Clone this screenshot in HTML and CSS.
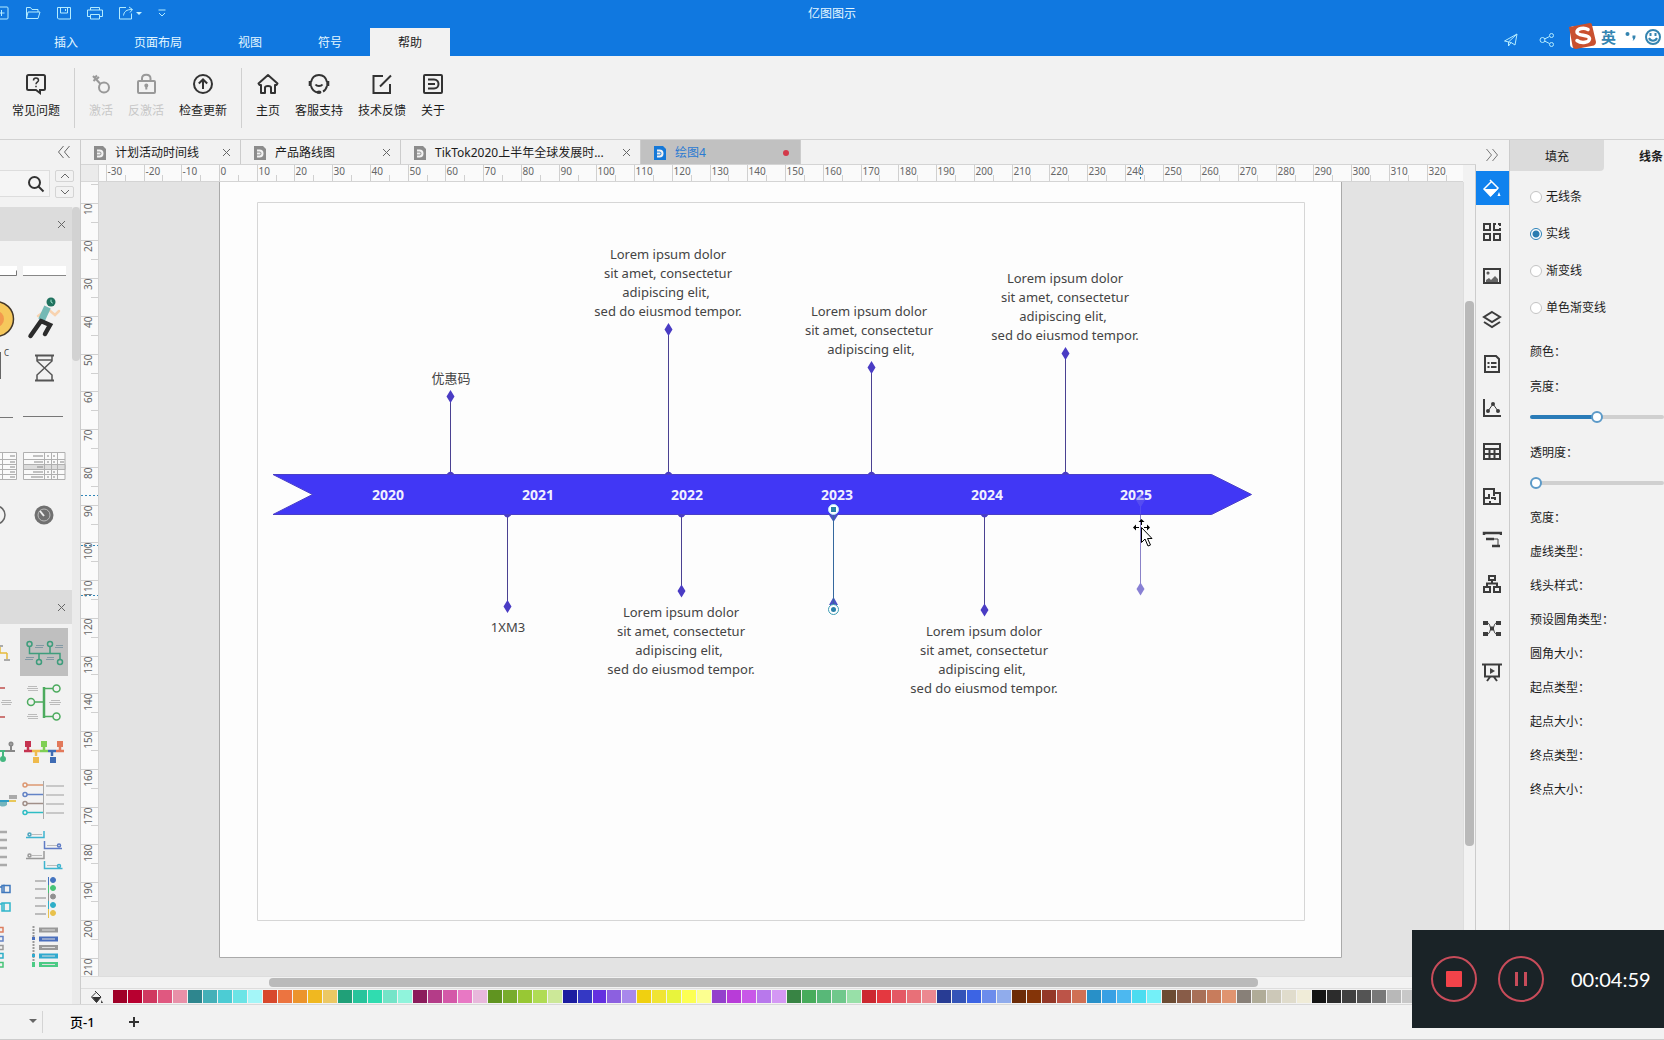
FILE: index.html
```html
<!DOCTYPE html>
<html lang="zh-CN">
<head>
<meta charset="utf-8">
<title>亿图图示</title>
<meta name="viewport" content="width=device-width, initial-scale=1">
<link rel="stylesheet" href="styles.css">
</head>
<body>
<header class="app-header">
  <div class="title-row">
    <div class="quick">
      <button class="quick-btn" aria-label="新建"><svg width="18" height="16" viewBox="0 0 18 16"><rect x="2" y="2" width="13" height="12" rx="1"/><path d="M8.500 5v6M5.500 8h6"/></svg></button>
      <button class="quick-btn" aria-label="打开"><svg width="18" height="16" viewBox="0 0 18 16"><path d="M2.500 13.500v-11h4l1.500 2h6v2.500M2.500 13.500l1.500-6.500h12l-2 6.500z"/></svg></button>
      <button class="quick-btn" aria-label="保存"><svg width="18" height="16" viewBox="0 0 18 16"><path d="M2.500 2.500h13v11.500h-12l-1-1zM5.500 2.500v5.500h7v-5.500M10.500 4v2"/></svg></button>
      <button class="quick-btn" aria-label="打印"><svg width="18" height="16" viewBox="0 0 18 16"><path d="M4.500 5V2.500h9V5M4.500 11.500h-3V5h15v6.500h-3M4.500 9.500h9v4.500h-9z"/></svg></button>
      <button class="quick-btn quick-share" aria-label="导出"><svg width="18" height="16" viewBox="0 0 18 16"><path d="M9 2.500H2.500V14h12V8.500M6.500 10.500c.5-4 3-6 8.500-6M12 2l3.500 2.500L13 7.500"/></svg><i class="caret"></i></button>
      <button class="quick-btn quick-more" aria-label="自定义"><svg width="10" height="10" viewBox="0 0 10 10"><path d="M1.500 2h7M2 5l3 3 3-3"/></svg></button>
    </div>
    <h1 class="app-title">亿图图示</h1>
  </div>
  <div class="menu-row">
    <nav class="menu">
      <button class="menu-tab">插入</button>
      <button class="menu-tab">页面布局</button>
      <button class="menu-tab">视图</button>
      <button class="menu-tab">符号</button>
      <button class="menu-tab is-active">帮助</button>
    </nav>
    <div class="share">
      <button class="share-btn" aria-label="发送"><svg width="16" height="16" viewBox="0 0 16 16"><path d="M1.500 9L14 2l-2 11-4-2.500zM14 2L5.500 10v4L8 10.500"/></svg></button>
      <button class="share-btn" aria-label="分享"><svg width="16" height="16" viewBox="0 0 16 16"><circle cx="3.500" cy="8" r="2.500"/><circle cx="12.500" cy="3.500" r="2"/><circle cx="12.500" cy="12.500" r="2"/><path d="M5.500 7l5-2.500M5.500 9l5 2.500"/></svg></button>
    </div>
  </div>
  <div class="ime">
    <svg class="ime-logo" width="30" height="28" viewBox="0 0 30 28"><path d="M1 5L22 1q2 0 2 2l4 17q0 3-2 3.500L8 27q-3 0-3.500-3z" fill="#c9502f"/><path d="M20 7.500c-4-2.500-11-1-11 2.500 0 4.500 12 2 12.500 6.500.3 4-8 5.500-12.500 2" fill="none" stroke="#fff" stroke-width="3.500" stroke-linecap="round"/></svg>
    <span class="ime-lang">英</span>
    <svg width="12" height="14" viewBox="0 0 12 14"><circle cx="3.500" cy="4" r="2" fill="#3484b0"/><path d="M8.500 5.500h3c.2 2.500-.8 4.500-3 5.500 1-1.500 1-2.500 0-3z" fill="#3484b0"/></svg>
    <svg class="ime-smile" width="18" height="18" viewBox="0 0 18 18"><g fill="none" stroke="#3484b0" stroke-width="2"><circle cx="9" cy="9" r="7"/><path d="M5 10c1.500 3.500 6.500 3.500 8 0"/><path d="M6.500 5v3M11.500 5v3"/></g></svg>
  </div>
</header>

<section class="ribbon">
  <div class="ribbon-group">
    <button class="tool"><svg width="22" height="22" viewBox="0 0 22 22"><path d="M3.500 2h15q1.500 0 1.500 1.500v12q0 1.500-1.500 1.500H15v3l-4-3H3.500Q2 17 2 15.500v-12Q2 2 3.500 2z"/><path stroke-width="1.500" d="M8.500 7.500c0-3.500 5-3.200 5-.3 0 2-2.500 2-2.500 4M11 12.800v1.500"/></svg><span>常见问题</span></button>
  </div>
  <div class="ribbon-group">
    <button class="tool" disabled><svg width="22" height="22" viewBox="0 0 22 22"><circle cx="14" cy="14.500" r="5"/><path d="M10.500 11L3 3M6 6.500l3-2.500M3.500 8l2.500-2.500M5 4.500l2-2"/></svg><span>激活</span></button>
    <button class="tool" disabled><svg width="22" height="22" viewBox="0 0 22 22"><rect x="3" y="8" width="17" height="12" rx="1"/><path d="M7 8V5.500c0-5 8.500-5 8.500 0V8"/><circle cx="11.300" cy="12.500" r="1"/><path d="M11.300 13v3.500"/></svg><span>反激活</span></button>
    <button class="tool"><svg width="22" height="22" viewBox="0 0 22 22"><circle cx="11" cy="11" r="9"/><path d="M11 16V7M6.800 10.500L11 6.500l4.200 4"/></svg><span>检查更新</span></button>
  </div>
  <div class="ribbon-group">
    <button class="tool"><svg width="22" height="22" viewBox="0 0 22 22"><path stroke-linejoin="round" d="M11 2l9.500 8.500-1 1.500H18v8h-4v-5.500c0-2-6-2-6 0V20H4v-8H2.500l-1-1.500z"/></svg><span>主页</span></button>
    <button class="tool"><svg width="22" height="22" viewBox="0 0 22 22"><path d="M3 9C5-.5 17-.5 19 9M3 13c1 3.500 3 6 7 6.500M19 13c-.7 2.500-2 4.500-4 5.500M7.500 11.500c1.500 2 5.500 2 7 0"/><path stroke-width="3" d="M2.200 8v5M19.800 8v5"/><ellipse cx="11" cy="19.300" rx="1.500" ry=".7" fill="#333"/></svg><span>客服支持</span></button>
    <button class="tool"><svg width="22" height="22" viewBox="0 0 22 22"><path d="M12 3H2.500v17H19v-9M9 13.500L20 2.500"/></svg><span>技术反馈</span></button>
    <button class="tool"><svg width="22" height="22" viewBox="0 0 22 22"><rect x="2" y="2" width="18" height="18" rx="1"/><path d="M6 6.500h6c6 0 6 9 0 9H6M6 11h7"/></svg><span>关于</span></button>
  </div>
</section>

<main class="body">
  <aside class="shapes">
    <div class="shapes-top"><button class="plain" aria-label="收起"><svg width="14" height="14" viewBox="0 0 14 14"><path d="M6.500 1L1.500 7l5 6M12.500 1l-5 6 5 6"/></svg></button></div>
    <div class="search-row">
      <button class="search" aria-label="搜索"><svg width="18" height="18" viewBox="0 0 18 18"><circle cx="7.500" cy="7.500" r="5.500"/><path d="M11.500 11.500l5 5"/></svg></button>
      <div class="spin">
        <button aria-label="上移"><svg width="10" height="6" viewBox="0 0 10 6"><path d="M1 5l4-4 4 4"/></svg></button>
        <button aria-label="下移"><svg width="10" height="6" viewBox="0 0 10 6"><path d="M1 1l4 4 4-4"/></svg></button>
      </div>
    </div>
    <div class="shapes-scroll">
      <div class="shapes-list">
        <div class="lib-head"><button class="plain" aria-label="关闭"><svg width="9" height="9" viewBox="0 0 9 9"><path d="M1 1l7 7M8 1L1 8"/></svg></button></div>
        <div class="lib lib-basic">
          <svg viewBox="0 0 48 48"><path fill="#fff" d="M0 21h46v9H0z"/><path d="M0 30.500h45.500v-5" fill="none" stroke="#777"/></svg>
          <svg viewBox="0 0 48 48"><path fill="#fff" d="M3 21h43v9H3z"/><path d="M3 30.500h43" stroke="#888"/></svg>
          <svg viewBox="0 0 48 48"><circle cx="25" cy="25" r="17.500" fill="#f6c85c" stroke="#44382a" stroke-width="1.500"/><circle cx="25" cy="25" r="8" fill="#f39a4d"/></svg>
          <svg viewBox="0 0 48 48" fill="none" stroke-linecap="round"><path d="M29 16l6 5 4-4M25 17l-7 5" stroke="#f8d3b0" stroke-width="2.500"/><path d="M27.500 13l-6 13" stroke="#74b9b5" stroke-width="7" stroke-linecap="butt"/><path d="M21 27L10.500 42M21 27l9 4-5 9" stroke="#2b2b2b" stroke-width="4.500"/><circle cx="31" cy="8" r="4.500" fill="#20725f"/><path d="M31 6v2l1.500 1" stroke="#9fe5cf"/></svg>
          <svg viewBox="0 0 48 48"><path d="M25 10h4v25h-4" fill="none" stroke="#666" stroke-width="2"/><text x="33" y="13" class="tiny">C</text></svg>
          <svg viewBox="0 0 48 48" fill="none" stroke="#555" stroke-width="2"><path d="M15 12.500h19M15 37.500h19"/><path stroke-width="1.500" d="M17 13v5l15 14v5M32 13v5L17 32v5M17 17h15"/></svg>
          <svg viewBox="0 0 48 48"><path d="M0 25.500h42" stroke="#777"/></svg>
          <svg viewBox="0 0 48 48"><path d="M3 24.500h40" stroke="#777"/></svg>
          <svg viewBox="0 0 48 48" fill="none" stroke="#b0b0b0"><path fill="#fafafa" d="M4 11.500h41.500v27H4zM31.500 11v27"/><path d="M4 18.500h41M4 23.500h41M4 28.500h41M4 33.500h41"/><path stroke="#888" d="M39 15h5M39 21h5M39 26h5M39 31h5M39 36h5"/></svg>
          <svg viewBox="0 0 48 48" fill="none" stroke="#b0b0b0"><path fill="#fafafa" d="M3.500 11.500h41.500v27H3.500z"/><path fill="#dcdcdc" d="M3.500 23.500h41.500v5H3.500z"/><path d="M24.500 11v27M31.500 11v27M37.500 11v27M3 18.500h42M3 33.500h42"/><path stroke="#888" d="M13 15h10M14 21h9M17 26h6M13 31h10M11 36h12M27 15h2M33 15h2M27 21h2M33 21h2M40 21h4M27 31h2M33 31h2M27 36h2M33 36h2"/></svg>
          <svg viewBox="0 0 48 48" fill="none" stroke="#666" stroke-width="1.500"><circle cx="25" cy="25" r="9"/></svg>
          <svg viewBox="0 0 48 48"><circle cx="24" cy="25" r="9.500" fill="#707070"/><circle cx="24" cy="25" r="6" fill="none" stroke="#bbb"/><path d="M24 26l-4-5" stroke="#eee" stroke-width="2"/></svg>
        </div>
        <div class="lib-head"><button class="plain" aria-label="关闭"><svg width="9" height="9" viewBox="0 0 9 9"><path d="M1 1l7 7M8 1L1 8"/></svg></button></div>
        <div class="lib">
          <svg viewBox="0 0 48 48" fill="none" stroke="#e6ba3c" stroke-width="1.500"><path d="M10 25h26M29 18v7M36 25v6"/><path stroke="#aaa" stroke-width="2" d="M26 18h6M33 32h6"/></svg>
          <svg class="is-picked" viewBox="0 0 48 48" fill="none" stroke="#3e9d7c" stroke-width="1.500"><path d="M9.500 18v7.500H40V31M30 18v7M19 25v6"/><circle cx="9.500" cy="16" r="2.500"/><circle cx="30" cy="16" r="2.500"/><circle cx="19" cy="34" r="2.500"/><circle cx="40" cy="34" r="2.500"/><path stroke="#8299a4" stroke-width="1" d="M16 17.500h8M15 19.500h8M36 17.500h7M35 19.500h8M6 29.500h8M5 31.500h8M27 29.500h7M26 31.500h8"/></svg>
          <svg viewBox="0 0 48 48" fill="none" stroke="#c0504d" stroke-width="1.500"><path d="M20 11h14M20 40h14"/><path stroke="#bbb" stroke-width="1" d="M31 23.500h9M30 25.500h11M31 27.500h9"/></svg>
          <svg viewBox="0 0 48 48" fill="none" stroke="#4cab5e" stroke-width="1.500"><path stroke-width="2.500" d="M24 10v31"/><path d="M24 11.500h9M24 25H14M24 39.500h9"/><circle cx="36.500" cy="11.500" r="3.500"/><circle cx="11" cy="25" r="3.500"/><circle cx="36.500" cy="39.500" r="3.500"/><path stroke="#bbb" stroke-width="1" d="M8 9.500h9M7 11.500h11M8 13.500h10M31 23.500h9M29 25.500h12M30 27.500h10M8 37.500h9M7 39.500h11M8 41.500h10"/></svg>
          <svg viewBox="0 0 48 48" fill="none" stroke="#45b780" stroke-width="2"><path d="M20 25h14"/><circle cx="32" cy="33" r="2" fill="#45b780"/><path d="M32 25v6"/><path stroke="#888" d="M34 25h10M40 19v6"/><circle cx="40" cy="18" r="1.500" stroke="#888"/></svg>
          <svg viewBox="0 0 48 48" fill="none" stroke-width="2.500"><path stroke="#c53350" d="M4 25h8M8 20v5"/><path stroke="#efba4c" d="M12 25h8M16 25v5"/><path stroke="#7fcf55" d="M20 25h8M24 20v5"/><path stroke="#3f6cb4" d="M28 25h8M32 25v5"/><path stroke="#e2795b" d="M36 25h8M40 20v5"/><path fill="#c53350" stroke="none" d="M5 15h6v6H5z"/><path fill="#efba4c" stroke="none" d="M13 31h6v6h-6z"/><path fill="#7fcf55" stroke="none" d="M21 15h6v6h-6z"/><path fill="#3f6cb4" stroke="none" d="M30 31h6v6h-6z"/><path fill="#e2795b" stroke="none" d="M37 15h6v6h-6z"/></svg>
          <svg viewBox="0 0 48 48" fill="none" stroke-width="2"><path stroke="#2f9ec4" d="M20 26h18"/><path stroke="#e8c75a" d="M38 26h7"/><path fill="#75b5bd" d="M28 27h8v3q-4 3-8 0z"/><path fill="#aaa" d="M38 20h8v4h-8z"/></svg>
          <svg viewBox="0 0 48 48" fill="none" stroke-width="1.500"><path stroke="#aaa" stroke-width="1" d="M23.500 6v38"/><path stroke="#bbb" d="M26 11h18M26 20h18M26 29h18M26 38h18"/><path stroke="#dd9872" d="M7 10h16"/><circle cx="5" cy="10" r="2" stroke="#dd9872"/><path stroke="#6383c6" d="M7 19.500h16"/><circle cx="5" cy="19.500" r="2" stroke="#6383c6"/><path stroke="#a08f88" d="M7 28.500h16"/><circle cx="5" cy="28.500" r="2" stroke="#a08f88"/><path stroke="#2ebdc4" d="M7 37.500h16"/><circle cx="5" cy="37.500" r="2" stroke="#2ebdc4"/></svg>
          <svg viewBox="0 0 48 48" stroke="#aaa" stroke-width="2.500"><path d="M29 8h7M29 16h7M29 24h7M29 33h7M29 41h7"/></svg>
          <svg viewBox="0 0 48 48" fill="none" stroke-width="1.500"><path stroke="#3eb4cf" d="M6 13.500h18V7M24.500 37v7.500h18"/><path stroke="#5f7cc5" d="M24.500 17v7.500H42"/><path stroke="#999" d="M6 34.500h18V27"/><path stroke="#bbb" stroke-width="1" d="M12 10.500h10M27 21.500h10M12 31.500h10M27 41.500h10"/><circle cx="9.500" cy="10.500" r="1.500" stroke="#4aa3bd"/><circle cx="39" cy="21.500" r="1.500" stroke="#5f7cc5"/><circle cx="9.500" cy="31.500" r="1.500" stroke="#999"/><circle cx="39" cy="42" r="1.500" stroke="#3eb4cf"/></svg>
          <svg viewBox="0 0 48 48" fill="none" stroke-width="1.500"><path stroke="#3f78bd" d="M27 14h4M31 12.500h8v7h-8zM33 11.500v8"/><path stroke="#2fb5ca" d="M27 31h4M31 30h8v8h-8zM33 30v8"/></svg>
          <svg viewBox="0 0 48 48"><g stroke="#aaa" stroke-width="1.500"><path d="M15 8h11M15 16h11M15 25h11M15 33h11M15 41h11"/></g><g fill="#4474c0" stroke="#4474c0"><path d="M28.500 4v8"/><circle cx="33" cy="7" r="2.500"/></g><g fill="#47c477" stroke="#47c477"><path d="M28.500 12v8"/><circle cx="33" cy="15" r="2.500"/></g><g fill="#909090" stroke="#909090"><path d="M28.500 20v8"/><circle cx="33" cy="23.500" r="2.500"/></g><g fill="#2eaec8" stroke="#2eaec8"><path d="M28.500 28v8"/><circle cx="33" cy="32" r="2.500"/></g><g fill="#e8c14c" stroke="#e8c14c"><path d="M28.500 36v9"/><circle cx="33" cy="40" r="2.500"/></g></svg>
          <svg viewBox="0 0 48 48" fill="none" stroke-width="1.500"><path stroke="#dd7e5f" d="M27 5.500h5v4.500h-5"/><path stroke="#6383c6" d="M27 14.500h5v4.500h-5"/><path stroke="#999" d="M27 23.500h5v4h-5"/><path stroke="#2eaec8" d="M27 31.500h5v4.500h-5"/><path stroke="#47c477" d="M27 40.500h5v4.500h-5"/></svg>
          <svg viewBox="0 0 48 48"><path stroke="#999" stroke-dasharray="2 1" stroke-width="2" d="M13.500 4v38"/><path fill="#999" d="M19 5.500h19v5H19zM19 23h19v5H19z"/><path fill="#4a6fbd" d="M19 14.500h19v5H19zM12 15h3v3h-3z"/><path fill="#2fa9cf" d="M19 31.500h19v5H19zM12 32h3v3h-3z"/><path fill="#4ccb85" d="M19 40h19v5H19zM12 40h3v5h-3z"/><path stroke="#ddd" d="M22 8h13M22 17h13M22 25.500h13M22 34h13M22 42.500h13"/></svg>
        </div>
      </div>
      <div class="side-track"><i></i></div>
    </div>
  </aside>

  <section class="editor">
    <nav class="docs">
      <div class="doc"><svg width="12" height="14" viewBox="0 0 12 14"><path class="sheet" d="M0 0h9l3 3v11H0z"/><path d="M3 4.500h2.500c4 0 4 6 0 6H3M3 7.500h3.500"/></svg><span>计划活动时间线</span><button class="plain" aria-label="关闭"><svg width="9" height="9" viewBox="0 0 9 9"><path d="M1 1l7 7M8 1L1 8"/></svg></button></div>
      <div class="doc"><svg width="12" height="14" viewBox="0 0 12 14"><path class="sheet" d="M0 0h9l3 3v11H0z"/><path d="M3 4.500h2.500c4 0 4 6 0 6H3M3 7.500h3.500"/></svg><span>产品路线图</span><button class="plain" aria-label="关闭"><svg width="9" height="9" viewBox="0 0 9 9"><path d="M1 1l7 7M8 1L1 8"/></svg></button></div>
      <div class="doc doc-wide"><svg width="12" height="14" viewBox="0 0 12 14"><path class="sheet" d="M0 0h9l3 3v11H0z"/><path d="M3 4.500h2.500c4 0 4 6 0 6H3M3 7.500h3.500"/></svg><span>TikTok2020上半年全球发展时...</span><button class="plain" aria-label="关闭"><svg width="9" height="9" viewBox="0 0 9 9"><path d="M1 1l7 7M8 1L1 8"/></svg></button></div>
      <div class="doc is-active"><svg width="12" height="14" viewBox="0 0 12 14"><path class="sheet" d="M0 0h9l3 3v11H0z"/><path d="M3 4.500h2.500c4 0 4 6 0 6H3M3 7.500h3.500"/></svg><span>绘图4</span><i class="dirty"></i></div>
    </nav>
    <div class="work">
      <div class="corner"></div>
      <div class="ruler-h"><svg id="ruler-h"></svg></div>
      <div class="blank"></div>
      <div class="ruler-v"><svg id="ruler-v"></svg></div>
      <div class="canvas">
        <svg class="page" width="1123" height="776" viewBox="219 182 1123 776">
          <path class="page-edge" d="M219.500 182v775.500h1122V182"/>
          <path class="margin" d="M257.500 202.500h1047v718h-1047z"/>
          <g class="stems">
            <path d="M450.500 397v77M668.500 330v144M871.500 368v106M1065.500 354v120M507.500 515v91M681.500 515v76M984.500 515v95"/>
          </g>
          <g class="dots">
            <path d="M446 475q4.500-7 9 0zM664 475q4.500-7 9 0zM867 475q4.500-7 9 0zM1061 475q4.500-7 9 0zM503 514q4.500 7 9 0zM677 514q4.500 7 9 0zM980 514q4.500 7 9 0z"/>
            <path d="M450.500 390l4 6.500-4 6.500-4-6.500zM668.500 323l4 6.500-4 6.500-4-6.500zM871.500 361l4 6.500-4 6.500-4-6.500zM1065.500 347l4 6.500-4 6.500-4-6.500zM507.500 600l4 6.500-4 6.500-4-6.500zM681.500 584.500l4 6.500-4 6.500-4-6.500zM984.500 603.500l4 6.500-4 6.500-4-6.500z"/>
          </g>
          <path class="band" d="M273 474.500h938.500l40 20-40 20H273l39.500-20z"/>
          <g class="years">
            <text x="388" y="500">2020</text><text x="538" y="500">2021</text><text x="687" y="500">2022</text><text x="837" y="500">2023</text><text x="987" y="500">2024</text><text x="1136" y="500">2025</text>
          </g>
          <g class="notes">
            <text x="451" y="383">优惠码</text>
            <text x="508" y="632">1XM3</text>
            <text><tspan x="668" y="259">Lorem ipsum dolor</tspan><tspan x="668" y="278">sit amet, consectetur</tspan><tspan x="666" y="297">adipiscing elit,</tspan><tspan x="668" y="316">sed do eiusmod tempor.</tspan></text>
            <text><tspan x="869" y="316">Lorem ipsum dolor</tspan><tspan x="869" y="335">sit amet, consectetur</tspan><tspan x="871" y="354">adipiscing elit,</tspan></text>
            <text><tspan x="1065" y="283">Lorem ipsum dolor</tspan><tspan x="1065" y="302">sit amet, consectetur</tspan><tspan x="1063" y="321">adipiscing elit,</tspan><tspan x="1065" y="340">sed do eiusmod tempor.</tspan></text>
            <text><tspan x="681" y="617">Lorem ipsum dolor</tspan><tspan x="681" y="636">sit amet, consectetur</tspan><tspan x="679" y="655">adipiscing elit,</tspan><tspan x="681" y="674">sed do eiusmod tempor.</tspan></text>
            <text><tspan x="984" y="636">Lorem ipsum dolor</tspan><tspan x="984" y="655">sit amet, consectetur</tspan><tspan x="982" y="674">adipiscing elit,</tspan><tspan x="984" y="693">sed do eiusmod tempor.</tspan></text>
          </g>
          <g class="selected">
            <path class="wedge" d="M829 515h9l-4.500 7zM829 605l4.500-8 4.500 8z"/>
            <path class="rod" d="M833.500 515v90"/>
            <circle class="halo" cx="833.500" cy="509.500" r="5"/><path class="core" d="M831 507h5v5h-5z"/>
            <circle class="halo ring" cx="833.500" cy="609.500" r="5"/><circle class="core" cx="833.500" cy="609.500" r="2.500"/>
          </g>
          <g class="ghost">
            <path class="fade" d="M1140.500 493v21M1136.500 500l4-6.500 4 6.500-4 6.500z"/>
            <path class="rod" d="M1140.500 515v70"/><path class="wedge" d="M1140.500 582.500l4 6.500-4 6.500-4-6.500z"/>
          </g>
          <g class="cursor">
            <path class="arrows" d="M1134 527.500h5M1144 527.500h5M1141.500 520v5M1141.500 531v3"/>
            <path class="tips" d="M1133 527.500l3-3v6zM1150 527.500l-3-3v6zM1141.500 519l-3 3h6z"/>
            <path class="arrow" d="M1141.500 527.500v15l3.500-3.500 3 7 2.500-1-3-6.500h4.500z"/>
          </g>
        </svg>
      </div>
      <div class="scroll-v"><i></i></div>
      <div class="scroll-h"><i></i></div>
    </div>
    <div class="palette">
      <button class="plain bucket" aria-label="填充颜色"><svg width="14" height="14" viewBox="0 0 14 14"><path d="M5 1l6 6-4.500 5.500L1.500 7 6 2.500" fill="none" stroke="#333"/><path d="M2 7h9l-4.500 5.500zM11.500 10l1.500 3h-2z" fill="#333" stroke="none"/></svg></button>
      <div class="swatches" id="swatches"></div>
    </div>
  </section>

  <nav class="rail">
    <button class="rail-top" aria-label="收起面板"><svg width="14" height="14" viewBox="0 0 14 14"><path d="M1.500 1l5 6-5 6M7.500 1l5 6-5 6"/></svg></button>
    <button class="is-active" aria-label="样式"><svg width="20" height="20" viewBox="0 0 20 20"><path d="M8 2l8 8-7.500 8L2 11l7-7" stroke="#fff" stroke-width="1.500"/><path d="M2 11h14l-7 7zM17 14l1.500 4h-3z" fill="#fff" stroke="none"/></svg></button>
    <button aria-label="符号"><svg width="20" height="20" viewBox="0 0 20 20"><path d="M2 2h6v6H2zM2 12h6v6H2zM12 12h6v6h-6zM14 2h-2v6h6V6M16 2h2v2"/></svg></button>
    <button aria-label="图片"><svg width="20" height="20" viewBox="0 0 20 20"><path d="M2 3h16v14H2z"/><circle cx="6" cy="7" r=".5"/><path d="M4 16v-2l3-2 2 2 4-4 3 3v3z" fill="#666" stroke="none"/></svg></button>
    <button aria-label="图层"><svg width="20" height="20" viewBox="0 0 20 20"><path d="M10 2l8 5-8 5-8-5zM2 12l8 5 8-5"/></svg></button>
    <button aria-label="页面"><svg width="20" height="20" viewBox="0 0 20 20"><path d="M3 2h11l3 3v13H3zM5.500 9h2M9 9h5.500M5.500 13h2M9 13h5.500"/></svg></button>
    <button aria-label="图表"><svg width="20" height="20" viewBox="0 0 20 20"><path d="M2 1v17h17"/><path d="M6 13l5-7 5 7" stroke-width="1"/><g fill="#444"><circle cx="6" cy="13" r="1"/><circle cx="11" cy="6" r="1"/><circle cx="16" cy="13" r="1"/></g></svg></button>
    <button aria-label="表格"><svg width="20" height="20" viewBox="0 0 20 20"><path d="M2 2h16v15H2zM2 7h16M2 12h16M7.500 7v10M12.500 7v10"/></svg></button>
    <button aria-label="平面图"><svg width="20" height="20" viewBox="0 0 20 20"><path d="M2 3h10v4h6v11H2zM2 12h5V8M12 7v3M9 12h4v2M8 18v-3"/></svg></button>
    <button aria-label="甘特图"><svg width="20" height="20" viewBox="0 0 20 20"><path d="M2 5V3h17v2M4 9h8M10 16h8" stroke-width="2.500"/><path d="M12 9h4v6" stroke-width="1"/></svg></button>
    <button aria-label="组织结构图"><svg width="20" height="20" viewBox="0 0 20 20"><path d="M7 2h6v4H7zM2 13h6v5H2zM12 13h6v5h-6zM10 6v3M5 13V9.500h10V13"/></svg></button>
    <button aria-label="思维导图"><svg width="20" height="20" viewBox="0 0 20 20"><path d="M1 5h5M14 5h5M1 16h5M14 16h5M8 10.500h4" stroke-width="4"/><path d="M5 5c4 0 2 5.500 5 5.500S11 5 15 5M5 16c4 0 2-5.500 5-5.500s1 5.500 5 5.500" stroke-width="1"/></svg></button>
    <button aria-label="演示"><svg width="20" height="20" viewBox="0 0 20 20"><path d="M0 2.500h20M3 3v11.500h14V3M8 15l-3 4M12 15l3 4"/><path d="M8 6l5 3-5 3z" fill="#444" stroke="none"/></svg></button>
  </nav>

  <aside class="props">
    <div class="props-tabs"><button>填充</button><button class="is-active">线条</button></div>
    <fieldset class="line-kind">
      <label><input type="radio" name="kind">无线条</label>
      <label><input type="radio" name="kind" checked>实线</label>
      <label><input type="radio" name="kind">渐变线</label>
      <label><input type="radio" name="kind">单色渐变线</label>
    </fieldset>
    <div class="settings">
      <span>颜色：</span>
      <label for="bright">亮度：</label>
      <input class="half" type="range" id="bright" min="0" max="100" value="50">
      <label for="alpha">透明度：</label>
      <input type="range" id="alpha" min="0" max="100" value="0">
      <span>宽度：</span>
      <span>虚线类型：</span>
      <span>线头样式：</span>
      <span>预设圆角类型：</span>
      <span>圆角大小：</span>
      <span>起点类型：</span>
      <span>起点大小：</span>
      <span>终点类型：</span>
      <span>终点大小：</span>
    </div>
  </aside>
</main>

<footer class="status">
  <button class="page-menu" aria-label="页面列表"><i class="caret"></i></button>
  <button class="page-tab">页-1</button>
  <button class="plain add" aria-label="新建页面"><svg width="12" height="12" viewBox="0 0 12 12"><path d="M6 1v10M1 6h10"/></svg></button>
</footer>

<section class="recorder">
  <button aria-label="停止"><svg width="48" height="48" viewBox="0 0 48 48"><circle cx="24" cy="24" r="22"/><rect x="16" y="16" width="16" height="16" rx="1" fill="#f2434a" stroke="none"/></svg></button>
  <button aria-label="暂停"><svg width="48" height="48" viewBox="0 0 48 48"><circle cx="24" cy="24" r="22"/><path d="M19.500 17v14M28.500 17v14" stroke-width="3"/></svg></button>
  <time>00:04:59</time>
</section>
<script src="app.js"></script>
</body>
</html>
```
FILE: styles.css
```css
* { box-sizing: border-box; }
body {
  margin: 0;
  height: 100vh;
  display: flex;
  flex-direction: column;
  overflow: hidden;
  background: #f2f2f2;
  color: #1c1c1c;
  font: 12px/16px "Noto Sans", "Noto Sans CJK SC", sans-serif;
}
button {
  margin: 0;
  padding: 0;
  border: 0;
  background: none;
  color: inherit;
  font: inherit;
  display: flex;
  align-items: center;
  justify-content: center;
  flex: none;
}
svg { display: block; flex: none; }
.plain svg { fill: none; stroke: #666; }
.caret { border: 4px solid transparent; border-top-color: currentColor; border-bottom: 0; }

/* header */
.app-header { position: relative; flex: none; background: #1078e0; color: #e4f7ff; }
.title-row { display: grid; grid-template-columns: 1fr auto 1fr; height: 28px; align-items: center; padding-bottom: 2px; }
.quick { display: flex; margin-left: -14px; color: #c4f0ff; }
.quick-btn { width: 31px; height: 24px; }
.quick-btn svg, .share-btn svg { fill: none; stroke: #b4ecff; }
.quick-share { width: 38px; gap: 1px; }
.quick-share .caret { border-width: 3px; border-bottom: 0; }
.quick-more { width: 28px; }
.app-title { margin: 0; padding-top: 2px; font-size: 12px; font-weight: 400; }
.menu-row { display: flex; justify-content: space-between; height: 28px; }
.menu { display: flex; padding-left: 26px; }
.menu-tab { padding: 2px 28px 0; }
.menu-tab.is-active { background: #f2f2f2; color: #222; }
.share { display: flex; gap: 20px; padding: 0 109px 4px 0; }
.ime { position: absolute; right: 0; top: 26px; height: 22px; display: flex; align-items: center; gap: 8px; padding: 0 2px 0 31px; background: #fff; border-radius: 4px 0 0 4px; }
.ime-logo { position: absolute; left: -2px; top: -4px; }
.ime-lang { color: #3484b0; font-size: 15px; font-weight: 700; }

/* ribbon */
.ribbon { flex: none; display: flex; height: 84px; padding: 12px 0; border-bottom: 1px solid #d2d2d2; }
.ribbon-group { display: flex; align-items: flex-start; gap: 15px; padding: 5px 14px 0; border-right: 1px solid #d0d0d0; height: 60px; }
.ribbon-group:first-child { padding-left: 12px; }
.ribbon-group:last-child { border: 0; }
.tool { flex-direction: column; gap: 8px; }
.tool svg { fill: none; stroke: #333; stroke-width: 2; }
.tool:disabled { color: #c8c8c8; }
.tool:disabled svg { stroke: #999; }

.body { flex: 1; display: flex; min-height: 0; }

/* shape library */
.shapes { flex: none; width: 81px; display: flex; flex-direction: column; border-right: 1px solid #ccc; }
.shapes-top { height: 30px; display: flex; justify-content: flex-end; padding: 0 9px 6px 0; }
.search-row { height: 37px; display: flex; gap: 5px; }
.search { width: 50px; height: 27px; border: 1px solid #ddd; border-left: 0; justify-content: flex-end; padding-right: 4px; background: #f5f5f5; }
.search svg { fill: none; stroke: #333; stroke-width: 2; }
.spin { width: 19px; display: flex; flex-direction: column; gap: 4px; }
.spin button { height: 12px; border: 1px solid #d4d4d4; border-radius: 2px; }
.spin svg { fill: none; stroke: #666; }
.shapes-scroll { flex: 1; display: flex; min-height: 0; }
.shapes-list { flex: 1; overflow: hidden; }
.side-track { width: 8px; background: #ebebeb; }
.side-track i { display: block; height: 154px; border-radius: 4px; background: #d2d2d2; }
.lib-head { height: 34px; display: flex; justify-content: flex-end; padding-right: 6px; background: #dcdcdc; }
.lib { display: grid; grid-template-columns: 48px 48px; grid-auto-rows: 48px; gap: 1px; margin-left: -29px; padding-top: 4px; }
.lib-basic { padding-bottom: 52px; }
.is-picked { background: #bfbfbf; }
.tiny { font-size: 8px; fill: #444; }

/* document tabs */
.editor { flex: 1; min-width: 0; display: flex; flex-direction: column; }
.docs { flex: none; display: flex; height: 25px; border-bottom: 1px solid #d4d4d4; }
.doc { flex: none; width: 160px; display: flex; align-items: center; gap: 9px; padding: 1px 9px 0 13px; border-right: 1px solid #ccc; white-space: nowrap; }
.doc-wide { width: 240px; }
.doc span { flex: 1; padding-top: 1px; }
.doc > svg { fill: none; stroke: #f2f2f2; stroke-width: 2; }
.sheet { fill: #8c8c8c; stroke: none; }
.doc.is-active { background: #c1c1c1; color: #2a7ad2; padding-right: 11px; }
.is-active .sheet { fill: #1478d8; }
.dirty { width: 6px; height: 6px; border-radius: 50%; background: #d33a4a; }

/* rulers and canvas */
.work { flex: 1; min-height: 0; display: grid; grid-template-columns: 18px 1fr 13px; grid-template-rows: 17px 1fr 12px; }
.corner { background: #ebebeb; border-right: 1px solid #d8d8d8; border-bottom: 1px solid #d8d8d8; }
.ruler-h, .ruler-v { background: #fafafa; overflow: hidden; min-height: 0; }
.ruler-h { border-bottom: 1px solid #d4d4d4; }
.ruler-v { border-right: 1px solid #d4d4d4; }
.ruler-h svg, .ruler-v svg { width: 100%; height: 100%; }
.tick { stroke: #d0d0d0; }
.mark { stroke: #2f86b8; stroke-dasharray: 2 2; }
.ruler-text { font-size: 10px; fill: #666; }
.ruler-v .ruler-text { text-anchor: end; }
.canvas { overflow: hidden; background: #e3e3e3; padding-left: 120px; min-height: 0; min-width: 0; }
.page { background: #fdfdfd; }
.page-edge { fill: none; stroke: #aaa; }
.margin { fill: none; stroke: #d6d6d6; }
.stems { stroke: #4a4192; fill: none; }
.dots { fill: #4a3cc4; }
.band { fill: #4137f5; stroke: #4a3fc8; }
.years { font-size: 14px; font-weight: 700; fill: #f0f0ff; text-anchor: middle; }
.notes { font-size: 13px; fill: #444; text-anchor: middle; }
.selected .wedge { fill: #4a52c4; }
.selected .rod { stroke: #35689e; }
.halo { fill: #fff; stroke: #b8ecf8; }
.halo.ring { stroke: #3b9cb4; }
.core { fill: #2a80a8; }
.ghost .rod { stroke: #8a82c8; }
.ghost .wedge { fill: #8880d4; }
.ghost .fade { stroke: #6a62f0; fill: #6a62f0; opacity: .5; }
.arrows { fill: none; stroke: #000; stroke-width: 1; }
.tips { fill: #000; }
.arrow { fill: #fff; stroke: #000; }
.scroll-v { display: flex; flex-direction: column; padding: 0 1px; border-left: 1px solid #ddd; border-right: 1px solid #ccc; }
.scroll-v::before { content: ""; flex: 119; }
.scroll-v i { flex: 545; background: #b9b9b9; border-radius: 4px; }
.scroll-v::after { content: ""; flex: 130; }
.blank { border-right: 1px solid #ccc; }
.scroll-h { grid-column: 1 / -1; display: flex; padding: 1px 0; border-top: 1px solid #ddd; }
.scroll-h::before { content: ""; flex: 188; }
.scroll-h i { flex: 989; background: #bababa; border-radius: 4px; }
.scroll-h::after { content: ""; flex: 218; }
.palette { flex: none; display: flex; height: 16px; border-top: 1px solid #ddd; }
.bucket { width: 32px; }
.swatches { flex: 1; display: flex; gap: 1px; padding: 1px 0; overflow: hidden; }
.swatches i { flex: 1; }

/* icon rail */
.rail { flex: none; width: 34px; display: flex; flex-direction: column; gap: 10px; border-right: 1px solid #ccc; }
.rail button { height: 34px; padding-right: 1px; }
.rail .rail-top { height: 31px; margin-bottom: -10px; padding: 0 2px 2px 0; }
.rail svg { fill: none; stroke: #3c3c3c; stroke-width: 2; }
.rail .rail-top svg { stroke: #777; stroke-width: 1; }
.rail .is-active { background: #1082ee; }

/* line properties */
.props { flex: none; width: 154px; overflow: hidden; }
.props-tabs { display: flex; height: 31px; }
.props-tabs button { width: 94px; padding-top: 2px; background: #dbdbdb; border-radius: 0 0 4px 0; }
.props-tabs .is-active { background: none; font-weight: 700; }
.line-kind { margin: 0; border: 0; padding: 7px 0 0 20px; }
.line-kind label { display: flex; align-items: center; height: 37px; gap: 4px; }
.line-kind input { appearance: none; width: 12px; height: 12px; margin: 0; border: 1px solid #c4c4c4; border-radius: 50%; background: #fff; }
.line-kind input:checked { border-color: #2a80b8; background: radial-gradient(circle, #2a7cb0 3px, #fff 4px); }
.settings { display: flex; flex-direction: column; padding: 9px 0 0 20px; }
.settings span, .settings label { height: 34px; line-height: 34px; }
.settings label { line-height: 36px; }
.settings input { appearance: none; width: 100%; height: 26px; margin: 1px 0 5px; background: none; }
.settings input::-webkit-slider-runnable-track { height: 4px; border-radius: 2px; background: #d0d0d0; }
.settings .half::-webkit-slider-runnable-track { background: linear-gradient(90deg, #2a7cb8 50%, #d0d0d0 50%); }
.settings input::-webkit-slider-thumb { appearance: none; width: 12px; height: 12px; margin-top: -4px; border: 2px solid #5c9ac8; border-radius: 50%; background: #fff; }

/* page bar */
.status { flex: none; display: flex; align-items: center; height: 36px; border-top: 1px solid #d8d8d8; border-bottom: 1px solid #ccc; }
.page-menu { width: 43px; height: 22px; justify-content: flex-end; padding: 0 5px 2px 0; border-right: 1px solid #d4d4d4; color: #666; }
.page-tab { margin-left: 27px; color: #000; font-size: 13px; font-weight: 500; }
.add { margin-left: 33px; }
.add svg { stroke: #333; stroke-width: 2; }

/* floating recorder */
.recorder { position: absolute; right: 0; bottom: 12px; width: 252px; height: 98px; display: flex; align-items: center; gap: 19px; padding-left: 18px; background: #1a2327; color: #fff; }
.recorder svg { fill: none; stroke: #c84c5a; stroke-width: 2; }
.recorder time { margin-left: 7px; font: 20px/24px Lato, sans-serif; }
```
FILE: app.js
```js
const NS = "http://www.w3.org/2000/svg";
const STEP = 37.74;

function add(parent, tag, attrs, text) {
  const el = document.createElementNS(NS, tag);
  for (const key in attrs) el.setAttribute(key, attrs[key]);
  if (text !== undefined) el.textContent = text;
  parent.appendChild(el);
}

const across = document.getElementById("ruler-h");
for (let n = -3; n <= 32; n++) {
  const x = Math.round(120 + n * STEP) + 0.5;
  const half = Math.round(120 + (n + 0.5) * STEP) + 0.5;
  add(across, "path", { class: "tick", d: `M${x} 0v16M${half} 10v6` });
  add(across, "text", { class: "ruler-text", x: x + 1, y: 10 }, n * 10);
}
add(across, "path", { class: "mark", d: "M1041.500 0v16" });

const side = document.getElementById("ruler-v");
for (let n = 0; n <= 21; n++) {
  const y = Math.round(-17 + n * STEP) + 0.5;
  const half = Math.round(-17 + (n + 0.5) * STEP) + 0.5;
  add(side, "path", { class: "tick", d: `M0 ${y}h17M10 ${half}h7` });
  if (n > 0) add(side, "text", { class: "ruler-text", transform: `translate(11 ${y}) rotate(-90)` }, n * 10);
}
add(side, "path", { class: "mark", d: "M0 313.500h17M0 363.500h17M0 413.500h17" });

const colors = `a00028 b80030 d03860 e05880 e890a8 2e868e 44b0b8 4cccd4 6ce4e6 a4f6f8
d8482c ec7440 ec942c f0b820 ecc864 20a078 28c49c 30dcb0 74e4c8 90f4dc
8c1c5c b43c88 d458a8 e878c4 e8b8dc 609420 78ac2c 98c834 b0dc54 cce898
1c1ca0 3438c4 6430e0 8c60e0 a888ec f0d010 f0e434 e8f43c fcff54 fcff90
9440cc b83cd8 c858e8 b878ec d498f4 388444 48ac5c 58b878 70c88c 98e0a8
cc2830 e43840 e45864 e87078 ec8890 283c94 3454b8 3c64e4 6c8cec 90acec
6c2c08 843408 943828 bc5448 d07054 2890c8 38a0e4 4cb8f0 4cdcf0 74f0f8
6c4c34 885c48 a87058 c87c5c e09470 888078 b0ac98 ccc8b8 e0dccc f0ecd8
141414 2c2c2c 404040 545454 787878 b8b8b8 c8c8c8 d8d8d8 e4e4e4 f0f0f0 ffffff`.split(/\s+/);
const swatches = document.getElementById("swatches");
for (const c of colors) {
  const cell = document.createElement("i");
  cell.style.background = "#" + c;
  swatches.appendChild(cell);
}
```
